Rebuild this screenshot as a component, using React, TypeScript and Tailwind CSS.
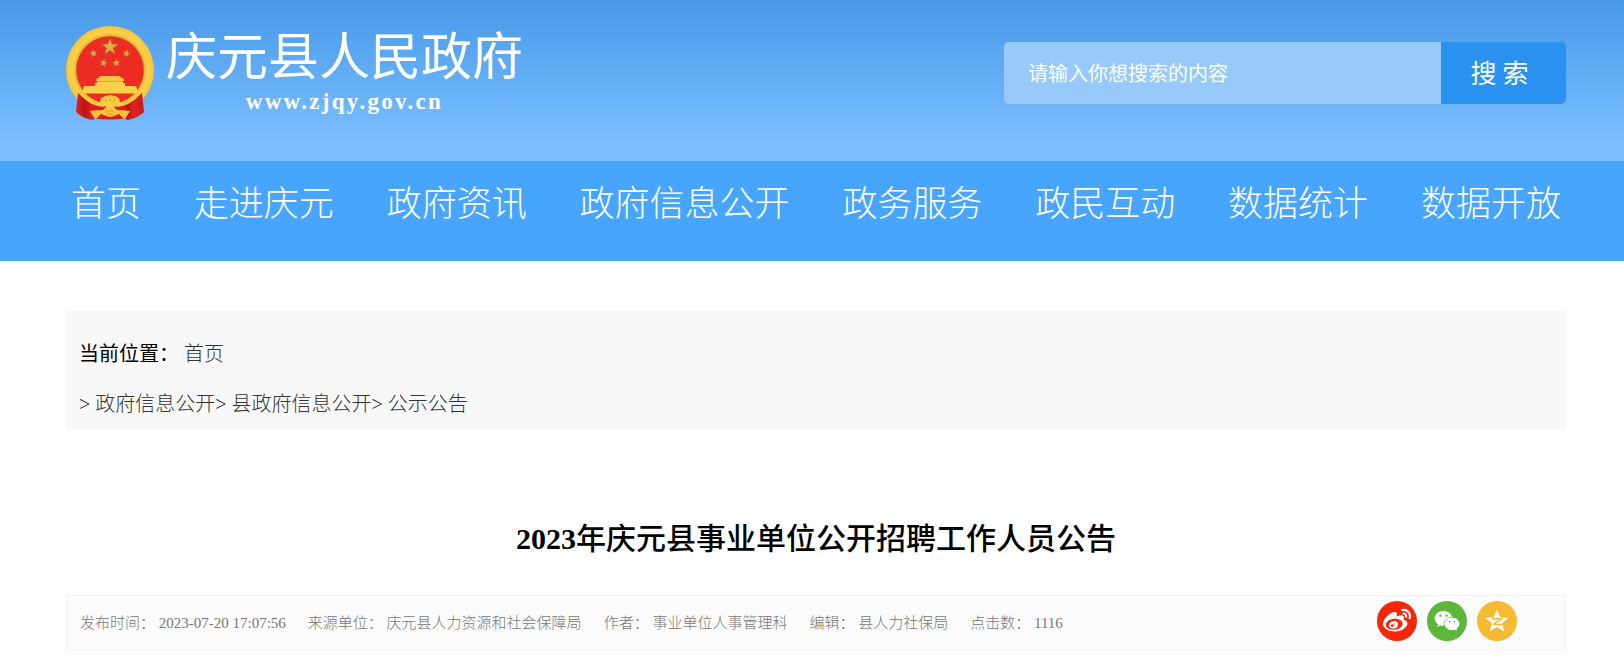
import { FaWeibo, FaWeixin } from "react-icons/fa";

interface INavItem {
    title: string,
    href: string
}

interface IMetaItem {
    label: string,
    value: string
}

const nav: INavItem[] = [
    { title: "首页", href: "#index" },
    { title: "走进庆元", href: "#about" },
    { title: "政府资讯", href: "#news" },
    { title: "政府信息公开", href: "#info" },
    { title: "政务服务", href: "#service" },
    { title: "政民互动", href: "#interact" },
    { title: "数据统计", href: "#stat" },
    { title: "数据开放", href: "#data" },
];

const crumbs: INavItem[] = [
    { title: "政府信息公开", href: "#info" },
    { title: "县政府信息公开", href: "#county" },
    { title: "公示公告", href: "#notice" },
];

const meta: IMetaItem[] = [
    { label: "发布时间：", value: "2023-07-20 17:07:56" },
    { label: "来源单位：", value: "庆元县人力资源和社会保障局" },
    { label: "作者：", value: "事业单位人事管理科" },
    { label: "编辑：", value: "县人力社保局" },
    { label: "点击数：", value: "1116" },
];

const STAR = "M0,-10 L2.4,-3.2 L9.5,-3.1 L3.8,1.2 L5.9,8.1 L0,4 L-5.9,8.1 L-3.8,1.2 L-9.5,-3.1 L-2.4,-3.2 Z";

function Emblem() {
    return (
        <svg viewBox="0 0 88 94" className="h-[94px] w-[88px] shrink-0" aria-hidden="true">
            <defs>
                <radialGradient id="gold" cx="50%" cy="50%" r="50%">
                    <stop offset="75%" stopColor="#b5741c" />
                    <stop offset="79%" stopColor="#eeb838" />
                    <stop offset="86%" stopColor="#fbd24b" />
                    <stop offset="100%" stopColor="#f8c43a" />
                </radialGradient>
                <linearGradient id="cloth" x1="0" x2="1">
                    <stop offset="0%" stopColor="#e3231f" />
                    <stop offset="35%" stopColor="#b91417" />
                    <stop offset="60%" stopColor="#e02420" />
                    <stop offset="100%" stopColor="#c4181a" />
                </linearGradient>
            </defs>
            <circle cx="44" cy="44" r="44" fill="url(#gold)" />
            <circle cx="44" cy="44" r="33.500" fill="#ee2b24" />
            <g fill="#e0ac42" stroke="#a8641a" strokeWidth="0.6">
                <path d={STAR} transform="translate(44 21) scale(0.9)" />
                <path d={STAR} transform="translate(27.5 27.5) rotate(-12) scale(0.45)" strokeWidth="1" />
                <path d={STAR} transform="translate(60.5 27.5) rotate(12) scale(0.45)" strokeWidth="1" />
                <path d={STAR} transform="translate(37.5 37) rotate(12) scale(0.45)" strokeWidth="1" />
                <path d={STAR} transform="translate(50.5 37) rotate(-12) scale(0.45)" strokeWidth="1" />
            </g>
            <path d="M34,50 H54 L55,52 H57 L58,55 H30 L31,52 H33 Z" fill="#f8c843" />
            <path d="M31,55 H57 V57 H59 V60 H70 L72,66 L70,67.500 H18 L16,66 L18,60 H29 V57 H31 Z" fill="#fbd04a" />
            <path d="M31,55.500 H57" stroke="#dd9a28" strokeWidth="0.8" />
            <path d="M12,67 C20,74 27,79 36,81 L27,94 C20,93 14,90 10,86 Z" fill="url(#cloth)" />
            <path d="M76,67 C68,74 61,79 52,81 L61,94 C68,93 74,90 78,86 Z" fill="url(#cloth)" />
            <path d="M29,79 H59 L62,92 Q44,95 26,92 Z" fill="#d81f1d" />
            <path d="M15,67 Q26,79 38,79 M73,67 Q62,79 50,79" stroke="#f7c63f" strokeWidth="4" fill="none" />
            <path
                d="M44,69 L49,70 L53,72 L54,76 L58,77 Q54,79 52,79 Q44,84 36,79 Q33,79 30,77 L34,76 L35,72 L39,70 Z"
                fill="#f9ca42"
            />
            <path
                d="M24,85 Q31,84 37,84 L40,81 H48 L51,84 Q57,84 64,85 Q60,92 58,93 L53,88 L48,90 Q44,92 40,90 L35,88 L30,93 Q26,90 24,85 Z"
                fill="#f6c23a"
            />
            <path d="M44,72 V75 M39,73 L41,76 M49,73 L47,76 M40,85 H48 M41,88 H47" stroke="#dd9a2c" strokeWidth="0.8" />
        </svg>
    );
}

function QzoneIcon() {
    return (
        <svg viewBox="0 0 24 24" className="size-6" aria-hidden="true">
            <path
                fill="#fff"
                d="M12,0.500 L15.200,8.200 L23.500,8.900 L17.200,14.300 L19.200,22.500 L12,18.100 L4.800,22.500 L6.800,14.300 L0.500,8.900 L8.800,8.200 Z"
            />
            <path d="M7,10 Q12,9.400 16.500,10 L8.700,15.100 Q13,15.900 19,14.900" fill="none" stroke="#f6b931" strokeWidth="1.500" />
        </svg>
    );
}

function Header() {
    return (
        <header className="bg-linear-to-b from-[#4799e8] to-[#7bbfff] to-90%">
            <div className="flex h-[161px] items-start justify-between pr-[58px] pl-[66px]">
                <a href="#index" className="flex items-start gap-3 pt-[26px] text-white">
                    <Emblem />
                    <div className="flex flex-col items-center">
                        <span className="pt-1 text-[51px] leading-[56px] font-normal">庆元县人民政府</span>
                        <span className="font-['Liberation_Serif',serif] text-[23px] leading-8 font-bold tracking-widest">www.zjqy.gov.cn</span>
                    </div>
                </a>
                <form
                    className="mt-[42px] flex h-[62px] w-[562px] overflow-hidden rounded-[5px] font-['Noto_Sans_CJK_SC',sans-serif]"
                    onSubmit={(e) => e.preventDefault()}
                >
                    <input
                        type="text"
                        aria-label="搜索内容"
                        placeholder="请输入你想搜索的内容"
                        className="min-w-0 flex-1 bg-[#97cafa] px-6 text-xl text-white outline-none placeholder:text-white"
                    />
                    <button type="submit" className="w-[125px] bg-[#2992f0] pr-2 pb-1 text-[26px] text-white">搜 索</button>
                </form>
            </div>
        </header>
    );
}

function Nav() {
    return (
        <nav className="bg-[#48a5fe]">
            <ul className="flex h-[100px] justify-between pr-[63px] pl-[71px]">
                {nav.map((item) => (
                    <li key={item.title}>
                        <a href={item.href} className="text-[35px] leading-[88px] font-light whitespace-nowrap text-white">{item.title}</a>
                    </li>
                ))}
            </ul>
        </nav>
    );
}

function Breadcrumbs() {
    return (
        <div className="bg-[#f8f8f8] px-[13px] pt-[18px] text-xl leading-[50px] font-light text-[#333]">
            <div>
                <span className="font-normal text-black">当前位置：</span> <a href="#index">首页</a>
            </div>
            <div>
                {crumbs.map((item) => (
                    <span key={item.title}>&gt; <a href={item.href}>{item.title}</a></span>
                ))}
            </div>
        </div>
    );
}

function Share() {
    return (
        <div className="flex gap-[10px] self-start pt-[5px] pr-[48px] text-white">
            <button type="button" aria-label="微博" className="flex size-10 items-center justify-center rounded-full bg-[#f5260b]">
                <FaWeibo className="size-7" />
            </button>
            <button type="button" aria-label="微信" className="flex size-10 items-center justify-center rounded-full bg-[#5db53a]">
                <FaWeixin className="size-[26px]" />
            </button>
            <button type="button" aria-label="QQ空间" className="flex size-10 items-center justify-center rounded-full bg-[#f6b931]">
                <QzoneIcon />
            </button>
        </div>
    );
}

function App() {
    return (
        <div className="bg-white font-['Liberation_Serif','Noto_Sans_CJK_SC',serif]">
            <Header />
            <Nav />
            <main className="pt-[50px] pr-[58px] pb-[10px] pl-[66px]">
                <Breadcrumbs />
                <h1 className="mt-[85px] text-center text-[30px] leading-[50px] font-medium text-black">
                    <span className="font-bold">2023</span>年庆元县事业单位公开招聘工作人员公告
                </h1>
                <div className="mt-[31px] flex h-[56px] items-center justify-between border border-[#f2f2f2] bg-[#fbfbfb] pl-[13px]">
                    <ul className="flex gap-[22px] pt-px text-[15px] font-light text-[#777]">
                        {meta.map((item) => (
                            <li key={item.label}>{item.label} {item.value}</li>
                        ))}
                    </ul>
                    <Share />
                </div>
            </main>
        </div>
    );
}

export default App;
